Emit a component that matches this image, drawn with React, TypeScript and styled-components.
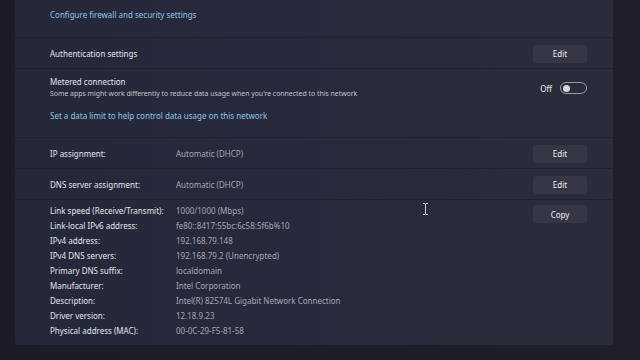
import styled, { createGlobalStyle } from "styled-components";

const GlobalStyle = createGlobalStyle`
  html, body {
    margin: 0;
    padding: 0;
    background: #1d1e29;
    overflow: hidden;
  }
  body {
    font-family: "Noto Sans", "Open Sans", sans-serif;
    -webkit-font-smoothing: antialiased;
  }
`;

const Page = styled.div`
  position: relative;
  width: 640px;
  height: 360px;
  background: linear-gradient(90deg, #1b1c27 0%, #1e1f2a 100%);
  padding-left: 15px;
  box-sizing: border-box;
`;

const CardStack = styled.div`
  width: 598px;
  display: flex;
  flex-direction: column;
  gap: 1px;
  background: #20222f;
  border-radius: 0 0 4px 4px;
  overflow: hidden;
`;

const Card = styled.div<{ height: number }>`
  height: ${(p) => p.height}px;
  box-sizing: border-box;
  padding: 1px 26px 0 35px;
  background: linear-gradient(90deg, #252839 0%, #272a3c 50%, #2b2c39 100%);
  display: flex;
  align-items: center;
  justify-content: space-between;
`;

const TopCard = styled(Card)`
  align-items: flex-start;
  padding-top: 10px;
`;

const MeteredCard = styled(Card)`
  flex-direction: column;
  align-items: stretch;
  justify-content: flex-start;
  padding-top: 8px;
`;

const DetailsCard = styled(Card)`
  align-items: flex-start;
  padding-top: 3px;
`;

const Link = styled.span`
  color: #8fc3e6;
  font-size: 8px;
  line-height: 10px;
`;

const Label = styled.span<{ width?: number }>`
  color: #e4e5ea;
  font-size: 8px;
  line-height: 10px;
  width: ${(p) => (p.width ? `${p.width}px` : "auto")};
  flex-shrink: 0;
`;

const Value = styled.span`
  color: #a6a8b4;
  font-size: 8px;
  line-height: 10px;
`;

const Subtitle = styled.span`
  color: #c2c3cc;
  font-size: 6.9px;
  line-height: 9px;
`;

const LabelGroup = styled.div`
  display: flex;
  align-items: center;
`;

const Button = styled.button`
  width: 54px;
  height: 18px;
  border: none;
  border-radius: 3px;
  background: #353744;
  color: #ecedf1;
  font-family: inherit;
  font-size: 8px;
  padding: 0;
  flex-shrink: 0;
`;

const MeteredTop = styled.div`
  display: flex;
  justify-content: space-between;
  align-items: center;
`;

const TitleBlock = styled.div`
  display: flex;
  flex-direction: column;
  gap: 2px;
`;

const ToggleWrap = styled.div`
  display: flex;
  align-items: center;
  gap: 8px;
  margin-top: 1px;
`;

const ToggleText = styled.span`
  color: #ecedf1;
  font-size: 8px;
`;

const Toggle = styled.div`
  width: 23px;
  height: 10px;
  border: 1px solid #9a9ba6;
  border-radius: 7px;
  display: flex;
  align-items: center;
  padding-left: 2px;
  box-sizing: content-box;
`;

const Knob = styled.div`
  width: 7px;
  height: 7px;
  border-radius: 50%;
  background: #d8d9df;
`;

const LimitLink = styled(Link)`
  margin-top: 13px;
`;

const DetailList = styled.div`
  display: flex;
  flex-direction: column;
`;

const DetailRow = styled.div`
  display: flex;
  align-items: center;
  height: 15px;
`;

const CopyButton = styled(Button)`
  margin-top: 2px;
`;

const Cursor = styled.svg`
  position: absolute;
  left: 422px;
  top: 203px;
`;

const details: Array<[string, string]> = [
  ["Link speed (Receive/Transmit):", "1000/1000 (Mbps)"],
  ["Link-local IPv6 address:", "fe80::8417:55bc:6c58:5f6b%10"],
  ["IPv4 address:", "192.168.79.148"],
  ["IPv4 DNS servers:", "192.168.79.2 (Unencrypted)"],
  ["Primary DNS suffix:", "localdomain"],
  ["Manufacturer:", "Intel Corporation"],
  ["Description:", "Intel(R) 82574L Gigabit Network Connection"],
  ["Driver version:", "12.18.9.23"],
  ["Physical address (MAC):", "00-0C-29-F5-81-58"],
];

export default function App() {
  return (
    <Page>
      <GlobalStyle />
      <CardStack>
        <TopCard height={37}>
          <Link>Configure firewall and security settings</Link>
        </TopCard>
        <Card height={30}>
          <Label>Authentication settings</Label>
          <Button>Edit</Button>
        </Card>
        <MeteredCard height={68}>
          <MeteredTop>
            <TitleBlock>
              <Label>Metered connection</Label>
              <Subtitle>
                Some apps might work differently to reduce data usage when
                you're connected to this network
              </Subtitle>
            </TitleBlock>
            <ToggleWrap>
              <ToggleText>Off</ToggleText>
              <Toggle>
                <Knob />
              </Toggle>
            </ToggleWrap>
          </MeteredTop>
          <LimitLink>Set a data limit to help control data usage on this network</LimitLink>
        </MeteredCard>
        <Card height={30}>
          <LabelGroup>
            <Label width={126}>IP assignment:</Label>
            <Value>Automatic (DHCP)</Value>
          </LabelGroup>
          <Button>Edit</Button>
        </Card>
        <Card height={30}>
          <LabelGroup>
            <Label width={126}>DNS server assignment:</Label>
            <Value>Automatic (DHCP)</Value>
          </LabelGroup>
          <Button>Edit</Button>
        </Card>
        <DetailsCard height={145}>
          <DetailList>
            {details.map(([label, value]) => (
              <DetailRow key={label}>
                <Label width={126}>{label}</Label>
                <Value>{value}</Value>
              </DetailRow>
            ))}
          </DetailList>
          <CopyButton>Copy</CopyButton>
        </DetailsCard>
      </CardStack>
      <Cursor width="7" height="12" viewBox="0 0 7 12">
        <path d="M1 0.5h2l0.5 0.5 0.5-0.5h2M3.5 1v10M1 11.5h2l0.5-0.5 0.5 0.5h2" stroke="#c9cad2" strokeWidth="1" fill="none" />
      </Cursor>
    </Page>
  );
}
